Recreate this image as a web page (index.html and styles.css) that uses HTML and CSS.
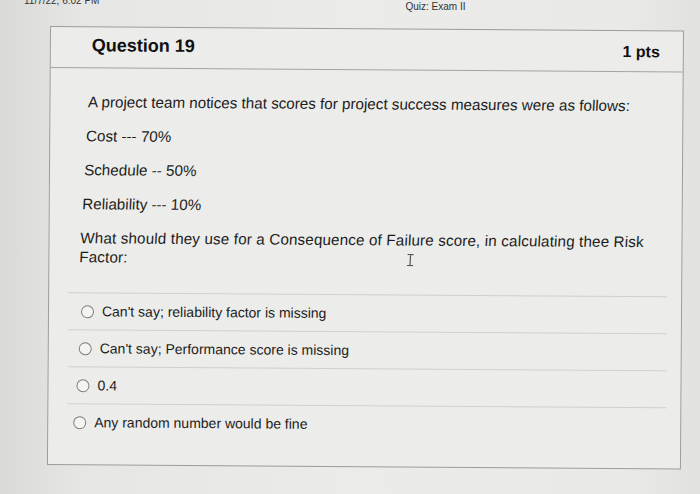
FILE: index.html
```html
<!DOCTYPE html>
<html lang="en">
<head>
<meta charset="utf-8">
<title>Quiz: Exam II</title>
<link rel="stylesheet" href="styles.css">
</head>
<body>
<div class="topbar">
  <span class="date">11/7/22, 6:02 PM</span>
  <span class="doc-title">Quiz: Exam II</span>
</div>
<section class="card">
  <header class="card-head">
    <h2 class="q-title">Question 19</h2>
    <span class="pts">1 pts</span>
  </header>
  <div class="card-body">
    <div class="question">
      <p class="q-line">A project team notices that scores for project success measures were as follows:</p>
      <p class="q-line">Cost --- 70%</p>
      <p class="q-line">Schedule -- 50%</p>
      <p class="q-line">Reliability --- 10%</p>
      <p class="q-line q-last">What should they use for a Consequence of Failure score, in calculating thee Risk Factor:</p>
      <svg class="ibeam" width="8" height="13" viewBox="0 0 8 13"><path d="M1 1h6M4 1v11M1 12h6" stroke="#555" stroke-width="1.2" fill="none"/></svg>
    </div>
    <ul class="answers">
      <li class="answer a1"><span class="radio"></span><span class="a-text">Can't say; reliability factor is missing</span></li>
      <li class="answer a2"><span class="radio"></span><span class="a-text">Can't say; Performance score is missing</span></li>
      <li class="answer a3"><span class="radio"></span><span class="a-text">0.4</span></li>
      <li class="answer a4"><span class="radio"></span><span class="a-text">Any random number would be fine</span></li>
    </ul>
  </div>
</section>
</body>
</html>
```
FILE: styles.css
```css
html, body {
  margin: 0;
  padding: 0;
}
body {
  width: 700px;
  height: 494px;
  overflow: hidden;
  background: linear-gradient(90deg, #d9d9d7 0%, #e6e6e4 12%, #ebebe9 50%, #e9e9e7 90%, #e1e1df 100%);
  font-family: "Liberation Sans", Arial, sans-serif;
  color: #1e1e1e;
}
.topbar {
  display: flex;
  height: 20px;
  margin-top: -6px;
  font-size: 10px;
  line-height: 14px;
  color: #333;
}
.date {
  margin-left: 24px;
}
.doc-title {
  margin-left: 306px;
  margin-top: 6px;
}
.card {
  margin: 12px 16px 0 50px;
  height: 437px;
  border: 1px solid #9c9c9a;
  background: #ececea;
  transform: rotate(0.4deg);
  transform-origin: 0 0;
}
.card-head {
  display: flex;
  align-items: center;
  justify-content: space-between;
  height: 40px;
  border-bottom: 1px solid #a4a4a2;
  padding: 0 23px 0 41px;
}
.q-title {
  margin: 0;
  font-size: 18px;
  font-weight: bold;
  color: #111;
  position: relative;
  top: -2px;
}
.pts {
  font-size: 16px;
  font-weight: bold;
  color: #111;
  position: relative;
  top: 1px;
}
.card-body {
  padding: 24px 10px 0 19px;
}
.question {
  position: relative;
  padding-left: 19px;
  transform: skewX(-2.8deg);
  transform-origin: 0 0;
}
.q-line {
  margin: 0 0 14px;
  font-size: 15.2px;
  line-height: 20px;
  color: #1c1c1c;
}
.q-last {
  margin: 0;
  line-height: 19px;
  letter-spacing: 0.15px;
}
.ibeam {
  position: absolute;
  left: 346px;
  top: 159px;
}
.answers {
  list-style: none;
  margin: 26px 4px 0 0;
  padding: 0;
  border-top: 1px solid #cfcfcd;
}
.answer {
  display: flex;
  align-items: center;
  height: 36px;
  border-bottom: 1px solid #cfcfcd;
  font-size: 14px;
  color: #1c1c1c;
}
.answer:last-child {
  border-bottom: none;
}
.a1 { padding-left: 13px; }
.a2 { padding-left: 11px; }
.a3 { padding-left: 9px; }
.a4 { padding-left: 6px; }
.radio {
  width: 11px;
  height: 11px;
  border: 1px solid #7d7d7b;
  border-radius: 50%;
  background: #f4f4f2;
  margin-right: 8px;
  flex: none;
}
```
